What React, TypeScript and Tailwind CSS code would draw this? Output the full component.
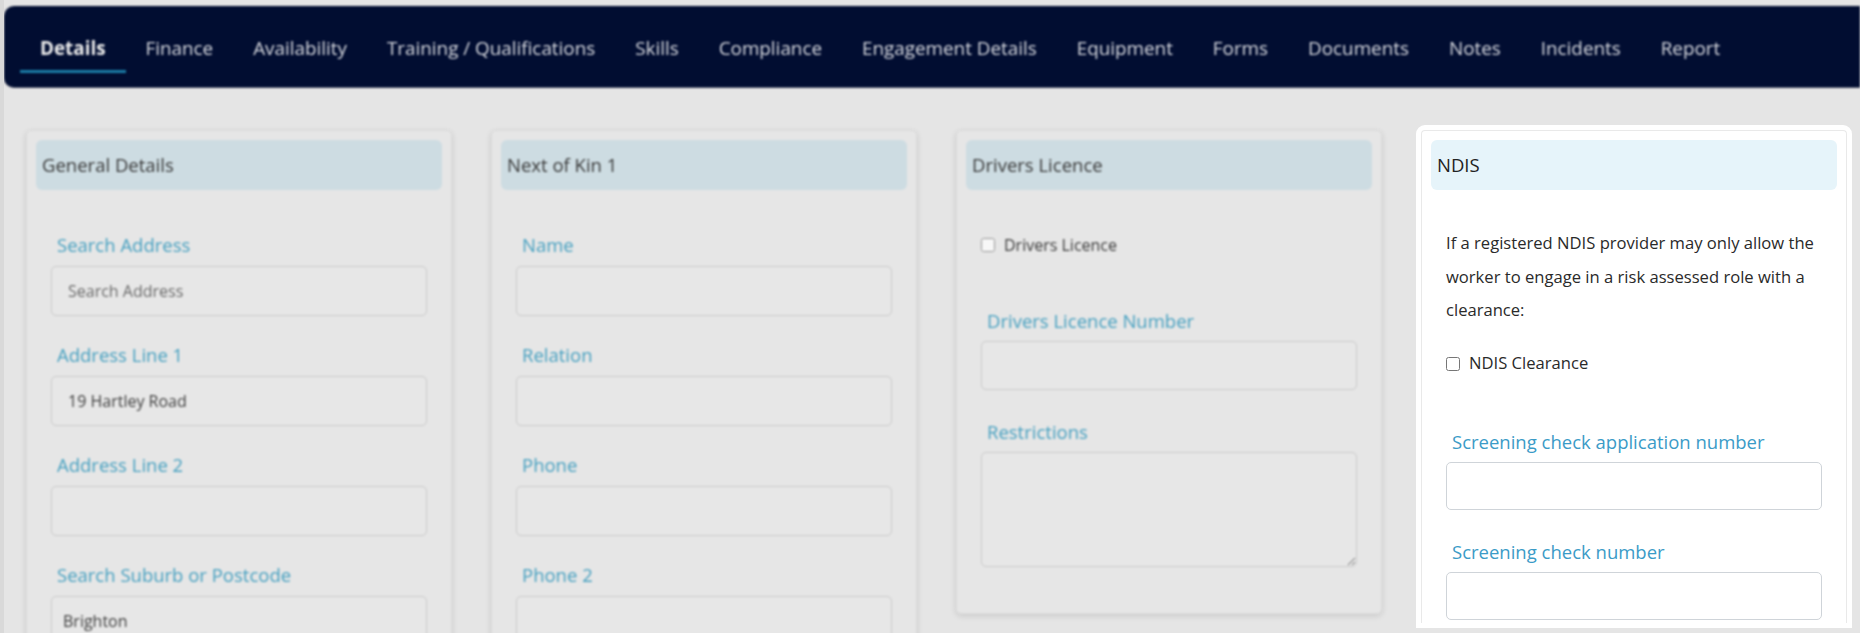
import React from "react";

const tabs = [
  "Details",
  "Finance",
  "Availability",
  "Training / Qualifications",
  "Skills",
  "Compliance",
  "Engagement Details",
  "Equipment",
  "Forms",
  "Documents",
  "Notes",
  "Incidents",
  "Report",
];

type FieldProps = { label: string; value?: string; muted?: boolean; pad?: string };

const DimField: React.FC<FieldProps> = ({ label, value, muted, pad = "pl-[16px]" }) => (
  <div className="mb-[24px]">
    <div className="pl-[6px] text-[18.5px] leading-[30px] text-[#46a0c0]">{label}</div>
    <div
      className={`mt-[6px] h-[50px] rounded-[5px] border border-[#cacaca] bg-[#e7e7e7] flex items-center text-[16px] ${pad} ${
        muted ? "text-[#6a6a6a]" : "text-[#3f3f3f]"
      }`}
    >
      {value}
    </div>
  </div>
);

const DimCard: React.FC<{ title: string; children: React.ReactNode; className?: string }> = ({
  title,
  children,
  className = "",
}) => (
  <div
    className={`w-[426px] rounded-[5px] border border-[#d9d9d9] bg-[#e6e6e6] px-[9px] pt-[9px] shadow-[0_2px_6px_rgba(0,0,0,0.12)] ${className}`}
  >
    <div className="h-[50px] rounded-[6px] bg-[#cddce2] px-[6px] flex items-center text-[18.5px] text-[#383838]">
      {title}
    </div>
    <div className="px-[15px] pt-[40px]">{children}</div>
  </div>
);

const NdisField: React.FC<{ label: string }> = ({ label }) => (
  <div className="mb-[27px]">
    <div className="pl-[6px] text-[18.5px] leading-[30px] text-[#3b9bc7]">{label}</div>
    <div className="mt-[5px] h-[48px] rounded-[5px] border border-[#cfd4d9] bg-white" />
  </div>
);

export default function App() {
  return (
    <div className="relative h-[633px] w-[1860px] overflow-hidden border-l-[4px] border-[#d9d9d9] bg-[#e5e5e5] font-['Open_Sans',sans-serif]">
      <nav className="mt-[6px] flex h-[82px] items-start rounded-l-[10px] border-b border-[#4a5168] bg-[#010d31] pl-[16px] pt-[28px] blur-[1.1px]">
        {tabs.map((t, i) => (
          <div
            key={t}
            className={`border-b-[3px] px-[20px] pb-[7px] text-[18.85px] leading-[29px] whitespace-nowrap ${
              i === 0 ? "border-[#1b7ca6] font-bold text-[#ececec]" : "border-transparent text-[#d9dbe1]"
            }`}
          >
            {t}
          </div>
        ))}
      </nav>

      <div className="mt-[42px] flex items-start gap-[39px] pl-[22px]">
        <DimCard title="General Details" className="blur-[1.1px]">
          <DimField label="Search Address" value="Search Address" muted />
          <DimField label="Address Line 1" value="19 Hartley Road" />
          <DimField label="Address Line 2" />
          <DimField label="Search Suburb or Postcode" value="Brighton" pad="pl-[11px]" />
        </DimCard>

        <DimCard title="Next of Kin 1" className="blur-[1.1px]">
          <DimField label="Name" />
          <DimField label="Relation" />
          <DimField label="Phone" />
          <DimField label="Phone 2" />
        </DimCard>

        <DimCard title="Drivers Licence" className="pb-[46px] blur-[1.1px]">
          <div className="flex h-[30px] items-center gap-[9px] text-[16px] text-[#3a3a3a]">
            <input type="checkbox" className="m-0 h-[14px] w-[14px] opacity-70" readOnly />
            <span>Drivers Licence</span>
          </div>
          <div className="mt-[46px]">
            <div className="pl-[6px] text-[18.5px] leading-[30px] text-[#46a0c0]">Drivers Licence Number</div>
            <div className="mt-[5px] h-[49px] rounded-[5px] border border-[#cacaca] bg-[#e7e7e7]" />
          </div>
          <div className="mt-[27px]">
            <div className="pl-[6px] text-[18.5px] leading-[30px] text-[#46a0c0]">Restrictions</div>
            <textarea
              readOnly
              className="mt-[5px] block h-[115px] w-full resize-y rounded-[5px] border border-[#cacaca] bg-[#e7e7e7]"
            />
          </div>
        </DimCard>

        <div className="h-[493px] w-[426px] overflow-hidden rounded-t-[4px] border border-b-0 border-[#e9e9e9] bg-white px-[9px] pt-[9px] outline-[5px] outline-solid outline-white">
          <div className="h-[50px] rounded-[6px] bg-[#e6f4fa] px-[6px] flex items-center text-[18.5px] text-[#222]">
            NDIS
          </div>
          <div className="px-[15px] pt-[36px]">
            <p className="text-[16.6px] leading-[33.5px] text-[#2a2a2a] whitespace-nowrap">
              If a registered NDIS provider may only allow the
              <br />
              worker to engage in a risk assessed role with a
              <br />
              clearance:
            </p>
            <div className="mt-[22px] flex h-[30px] items-center gap-[9px] text-[16.6px] text-[#2a2a2a]">
              <input type="checkbox" className="m-0 h-[14px] w-[14px]" readOnly />
              <span>NDIS Clearance</span>
            </div>
            <div className="mt-[48px]">
              <NdisField label="Screening check application number" />
              <NdisField label="Screening check number" />
            </div>
          </div>
        </div>
      </div>
    </div>
  );
}
